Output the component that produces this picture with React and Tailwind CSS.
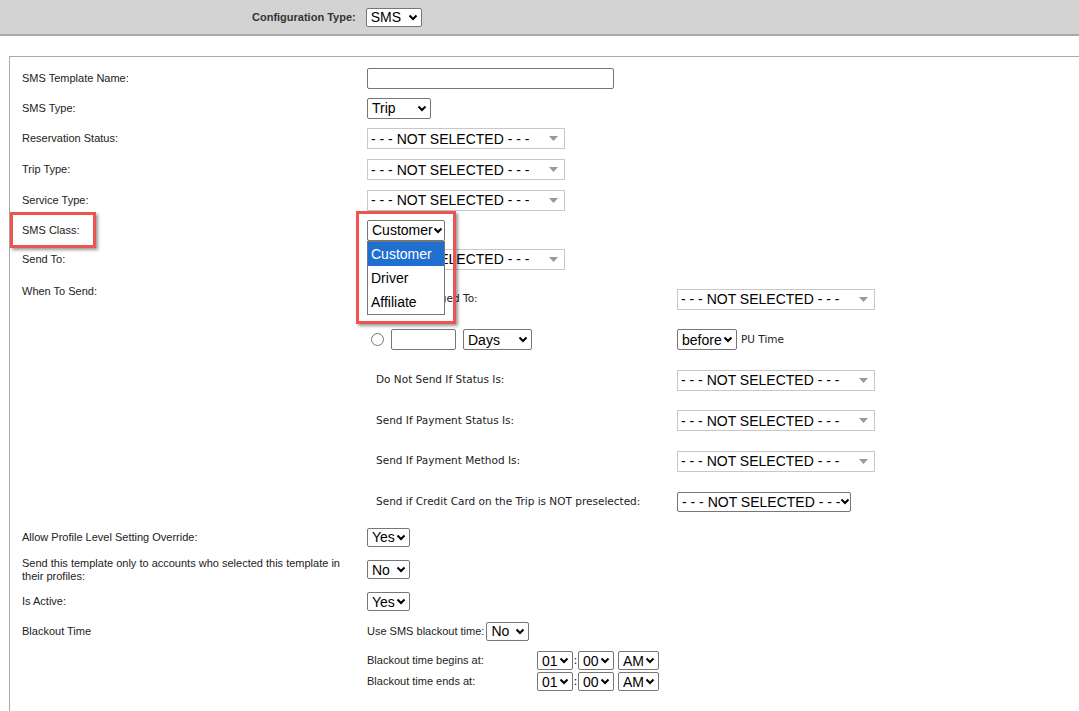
import React from "react";

const L = "font-[Liberation_Sans,Arial,sans-serif]";
const V = "font-[DejaVu_Sans,Verdana,sans-serif]";

function Chev({ cls = "" }) {
  return (
    <svg width="10" height="7" viewBox="0 0 10 7" className={`shrink-0 ${cls}`}>
      <path d="M1.5 1.5 L5 5 L8.5 1.5" fill="none" stroke="#000" strokeWidth="2" />
    </svg>
  );
}

function Sel({ text, w, h = 21 }) {
  return (
    <div
      className={`${L} flex items-center justify-between border border-[#767676] rounded-[2px] bg-white pl-[4px] pr-[3px] text-[14px] text-black leading-none whitespace-nowrap`}
      style={{ width: w, height: h }}
    >
      <span>{text}</span>
      <Chev />
    </div>
  );
}

function NS({ w = 198 }) {
  return (
    <div
      className={`${L} flex items-center justify-between border border-[#c8c8c8] bg-white pl-[3px] pr-[6px] text-[14px] text-black leading-none h-[21px] whitespace-nowrap`}
      style={{ width: w }}
    >
      <span>- - - NOT SELECTED - - -</span>
      <svg width="9" height="5" viewBox="0 0 9 5"><path d="M0 0 H9 L4.5 5 Z" fill="#999" /></svg>
    </div>
  );
}

function Row({ h, label, children, top }) {
  return (
    <div className={`flex ${top ? "items-start" : "items-center"}`} style={{ height: h }}>
      <div className={`${L} w-[357px] shrink-0 text-[11px] text-[#222] pl-[12px]`}>{label}</div>
      <div className="flex items-center">{children}</div>
    </div>
  );
}

function Sub({ label, children }) {
  return (
    <div className="flex items-center h-[41px]">
      <div className={`${V} w-[310px] shrink-0 pl-[9px] text-[10.5px] text-[#222] whitespace-nowrap`}>{label}</div>
      <div className="flex items-center">{children}</div>
    </div>
  );
}

export default function App() {
  return (
    <div className="relative w-[1079px] h-[711px] bg-white overflow-hidden">
      <div className="h-[36px] bg-[#d3d3d3] border-b-2 border-[#a9a9a9] flex items-center pl-[252px]">
        <span className={`${L} text-[11px] font-bold text-[#333] mr-[10px]`}>Configuration Type:</span>
        <Sel text="SMS" w={56} h={19} />
      </div>
      <div className="ml-[9px] mt-[20px] border-l border-t border-[#a9a9a9] h-[700px] pt-[6px]">
        <Row h={30} label="SMS Template Name:">
          <div className="w-[247px] h-[21px] border border-[#767676] rounded-[2px]" />
        </Row>
        <Row h={30} label="SMS Type:"><Sel text="Trip" w={64} /></Row>
        <Row h={31} label="Reservation Status:"><NS /></Row>
        <Row h={31} label="Trip Type:"><NS /></Row>
        <Row h={30} label="Service Type:"><NS /></Row>
        <Row h={30} label="SMS Class:"><Sel text="Customer" w={78} /></Row>
        <Row h={28} label="Send To:"><NS /></Row>
        <div className="flex h-[249px]">
          <div className={`${L} w-[357px] shrink-0 text-[11px] text-[#222] pl-[12px] pt-[10px]`}>When To Send:</div>
          <div className="flex flex-col pt-[6px]">
            <Sub label="Status Changed To:"><NS /></Sub>
            <Sub label={
              <div className="flex items-center -ml-[5px] gap-[7px]">
                <div className="w-[13px] h-[13px] rounded-full border border-[#767676]" />
                <div className="w-[65px] h-[21px] border border-[#767676] rounded-[2px]" />
                <Sel text="Days" w={69} />
              </div>
            }>
              <Sel text="before" w={60} />
              <span className={`${V} text-[10.5px] text-[#222] ml-[4px]`}>PU Time</span>
            </Sub>
            <Sub label="Do Not Send If Status Is:"><NS /></Sub>
            <Sub label="Send If Payment Status Is:"><NS /></Sub>
            <Sub label="Send If Payment Method Is:"><NS /></Sub>
            <Sub label="Send if Credit Card on the Trip is NOT preselected:"><Sel text="- - - NOT SELECTED - - -" w={174} h={20} /></Sub>
          </div>
        </div>
        <Row h={30} label="Allow Profile Level Setting Override:"><Sel text="Yes" w={43} h={19} /></Row>
        <Row h={35} label={<span className="block leading-[13px] w-[335px]">Send this template only to accounts who selected this template in their profiles:</span>}>
          <Sel text="No" w={43} h={19} />
        </Row>
        <Row h={29} label="Is Active:"><Sel text="Yes" w={43} h={19} /></Row>
        <Row h={30} label="Blackout Time">
          <span className={`${L} text-[11px] text-[#222] mr-[2px]`}>Use SMS blackout time:</span>
          <Sel text="No" w={43} h={19} />
        </Row>
        {["Blackout time begins at:", "Blackout time ends at:"].map((t, i) => (
          <div key={t} className={`flex items-center h-[21px] pl-[357px] ${i === 0 ? "mt-[4px]" : ""}`}>
            <span className={`${L} text-[11px] text-[#222] w-[170px]`}>{t}</span>
            <Sel text="01" w={36} h={19} />
            <span className="text-[11px] mx-[1px]">:</span>
            <Sel text="00" w={36} h={19} />
            <span className="w-[4px]" />
            <Sel text="AM" w={41} h={19} />
          </div>
        ))}
      </div>

      <div className={`${L} absolute left-[367px] top-[241px] w-[78px] h-[74px] bg-white border border-[#767676] text-[14px]`}>
        <div className="h-[24px] bg-[#1f6fd0] text-white pl-[3px] flex items-center">Customer</div>
        <div className="h-[24px] pl-[3px] flex items-center">Driver</div>
        <div className="h-[24px] pl-[3px] flex items-center">Affiliate</div>
      </div>
      <div className="absolute left-[10px] top-[212px] w-[86px] h-[36px] border-[3px] border-[#ef5350] shadow-[2px_2px_3px_rgba(0,0,0,0.4)]" />
      <div className="absolute left-[356px] top-[211px] w-[100px] h-[113px] border-[3px] border-[#ef5350] shadow-[2px_2px_3px_rgba(0,0,0,0.4)]" />
    </div>
  );
}
